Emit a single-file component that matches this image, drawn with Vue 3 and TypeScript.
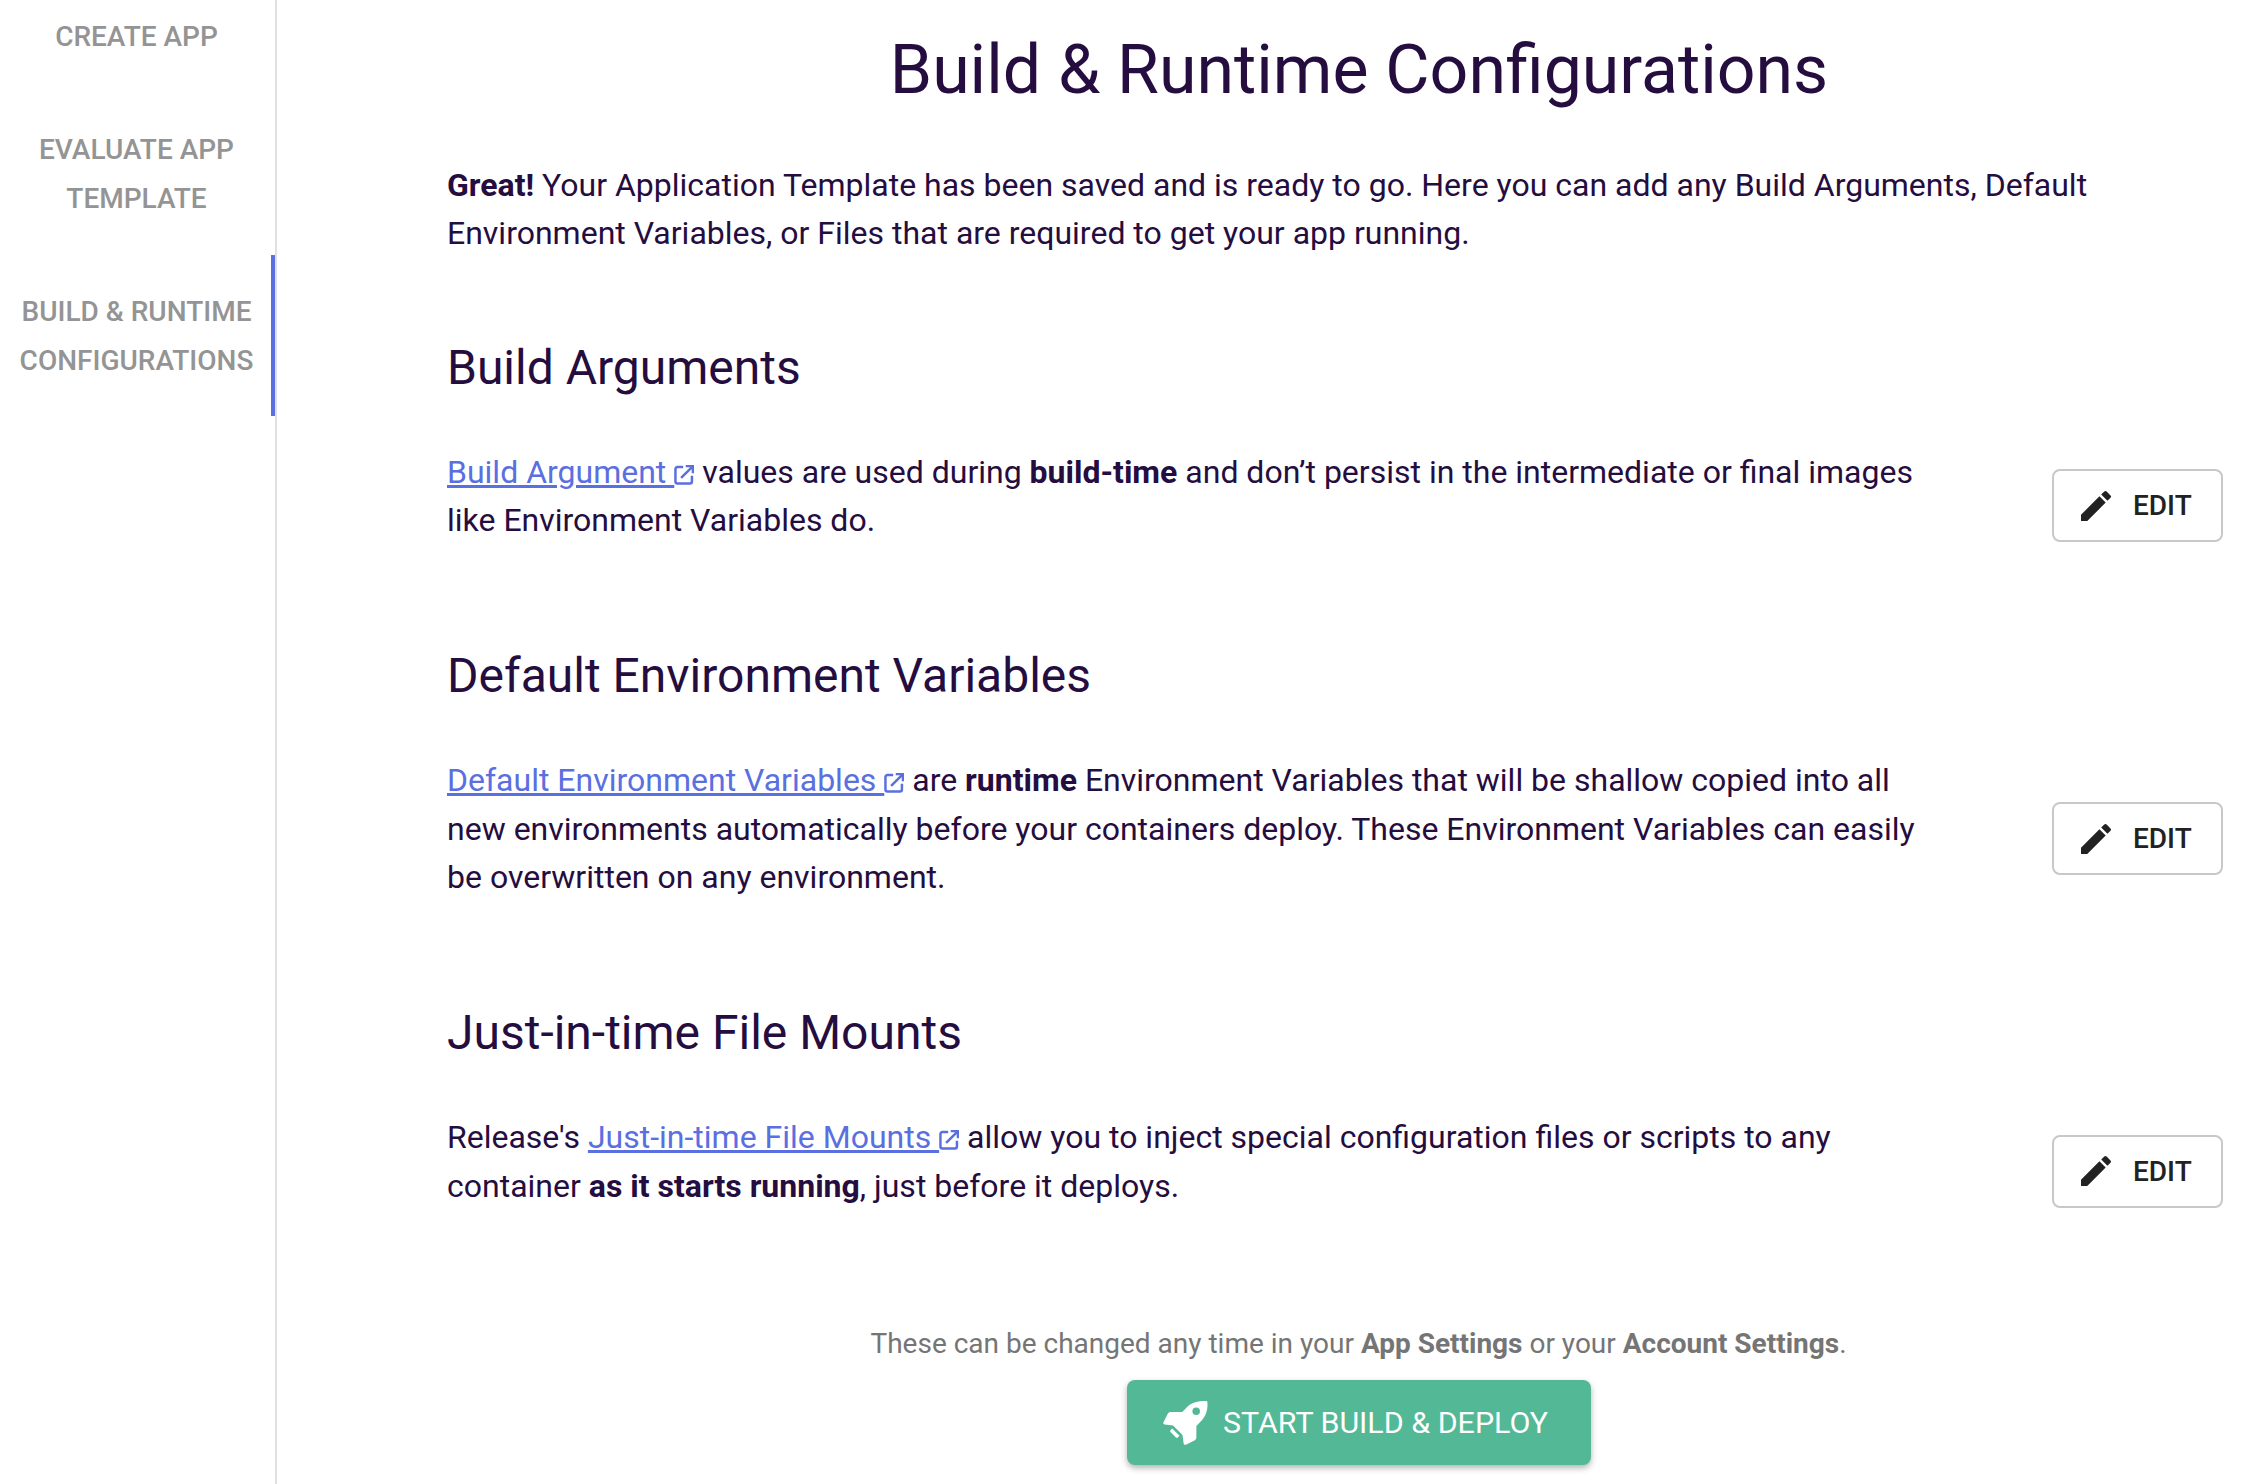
<script setup lang="ts">
const nav = [
  { lines: ['CREATE APP'], active: false, first: true },
  { lines: ['EVALUATE APP', 'TEMPLATE'], active: false, first: false },
  { lines: ['BUILD & RUNTIME', 'CONFIGURATIONS'], active: true, first: false },
]
</script>

<template>
  <div class="page">
    <aside class="side">
      <div v-for="item in nav" :key="item.lines[0]" class="nav" :class="{ active: item.active, first: item.first }">
        <div v-for="l in item.lines" :key="l">{{ l }}</div>
      </div>
    </aside>
    <main class="main">
      <h1 class="title">Build &amp; Runtime Configurations</h1>
      <p class="intro"><b>Great!</b> Your Application Template has been saved and is ready to go. Here you can add any Build Arguments, Default Environment Variables, or Files that are required to get your app running.</p>

      <h2 class="head h-a">Build Arguments</h2>
      <div class="row">
        <p class="para"><a class="link">Build Argument </a><svg class="ext" viewBox="2.600 2 19.400 19.400"><path d="M11.500 4H6a2 2 0 0 0-2 2v12a2 2 0 0 0 2 2h12a2 2 0 0 0 2-2v-5.500"/><path d="M9.500 14.500L20.500 3.500M14 3h7v7"/></svg> values are used during <b>build-time</b> and don’t persist in the intermediate or final images like Environment Variables do.</p>
        <button class="edit"><svg class="pen" viewBox="0 0 24 24"><path d="M3 17.25V21h3.750L17.810 9.940l-3.750-3.750L3 17.250zM20.710 7.040a1 1 0 0 0 0-1.410l-2.340-2.340a1 1 0 0 0-1.410 0l-1.830 1.830 3.750 3.750 1.830-1.830z"/></svg>EDIT</button>
      </div>

      <h2 class="head h-b">Default Environment Variables</h2>
      <div class="row">
        <p class="para"><a class="link">Default Environment Variables </a><svg class="ext" viewBox="2.600 2 19.400 19.400"><path d="M11.500 4H6a2 2 0 0 0-2 2v12a2 2 0 0 0 2 2h12a2 2 0 0 0 2-2v-5.500"/><path d="M9.500 14.500L20.500 3.500M14 3h7v7"/></svg> are <b>runtime</b> Environment Variables that will be shallow copied into all new environments automatically before your containers deploy. These Environment Variables can easily be overwritten on any environment.</p>
        <button class="edit"><svg class="pen" viewBox="0 0 24 24"><path d="M3 17.25V21h3.750L17.810 9.940l-3.750-3.750L3 17.250zM20.710 7.040a1 1 0 0 0 0-1.410l-2.340-2.340a1 1 0 0 0-1.410 0l-1.830 1.830 3.750 3.750 1.830-1.830z"/></svg>EDIT</button>
      </div>

      <h2 class="head h-b">Just-in-time File Mounts</h2>
      <div class="row">
        <p class="para">Release's <a class="link">Just-in-time File Mounts </a><svg class="ext" viewBox="2.600 2 19.400 19.400"><path d="M11.500 4H6a2 2 0 0 0-2 2v12a2 2 0 0 0 2 2h12a2 2 0 0 0 2-2v-5.500"/><path d="M9.500 14.500L20.500 3.500M14 3h7v7"/></svg> allow you to inject special configuration files or scripts to any container <b>as it starts running</b>, just before it deploys.</p>
        <button class="edit"><svg class="pen" viewBox="0 0 24 24"><path d="M3 17.25V21h3.750L17.810 9.940l-3.750-3.750L3 17.250zM20.710 7.040a1 1 0 0 0 0-1.410l-2.340-2.340a1 1 0 0 0-1.410 0l-1.830 1.830 3.750 3.750 1.830-1.830z"/></svg>EDIT</button>
      </div>

      <div class="foot">
        <p class="note">These can be changed any time in your <b>App Settings</b> or your <b>Account Settings</b>.</p>
        <button class="start"><svg class="rocket" viewBox="0 0 24 24"><path fill-rule="evenodd" d="M23.600 .6C20 .3 15.800 1 13 3.600L10.300 6.400H3.900Q3 6.400 2.600 7.200L.2 12Q-.1 13 .9 13L5.400 13.600L10.400 18.600L11 23.200Q11.200 24.200 12.200 23.800L17 21.400Q17.800 21 17.800 20V13.800L20.500 11C23.300 8.200 24.100 4 23.600 .6ZM17.700 4A2 2 0 1 0 17.700 8A2 2 0 1 0 17.700 4Z"/><path d="M4.900 15.200L8.800 19.100L7.900 20Q7.400 20.500 6.900 20L4 17.100Q3.500 16.600 4 16.100Z"/></svg>START BUILD &amp; DEPLOY</button>
      </div>
    </main>
  </div>
</template>

<style>
html, body { margin: 0; background: #fff; overflow: hidden; }
</style>

<style scoped>
.page {
  display: flex;
  width: 2266px;
  height: 1484px;
  overflow: hidden;
  font-family: Roboto, "Liberation Sans", sans-serif;
  color: #250d40;
}
.side {
  width: 275px;
  flex: none;
  border-right: 2px solid #e0e0e0;
  box-sizing: content-box;
}
.nav {
  padding: 32px 0 32px 2px;
  font-size: 28px;
  line-height: 49px;
  font-weight: 500;
  color: #949494;
  text-align: center;
  white-space: nowrap;
  border-right: 4px solid transparent;
}
.nav.first { padding-top: 11.5px; padding-bottom: 32.5px; }
.nav.active { border-right-color: #5a6fe0; padding-bottom: 30.5px; }
.main {
  flex: 1;
  min-width: 0;
  padding: 0 43px 0 170px;
}
.title {
  margin: 32px 0 0;
  font-size: 68px;
  line-height: 76px;
  font-weight: 400;
  text-align: center;
  width: 1824px;
}
.intro {
  margin: 53px 0 0;
  font-size: 32px;
  line-height: 48.2px;
  width: 1680px;
}
.head {
  margin: 0;
  font-size: 48px;
  line-height: 60px;
  font-weight: 400;
}
.h-a { margin-top: 80.5px; }
.h-b { margin-top: 101.500px; }
.row {
  display: flex;
  align-items: center;
  justify-content: space-between;
  margin-top: 50px;
}
.para {
  margin: 0;
  font-size: 32px;
  line-height: 48.5px;
  width: 1490px;
}
.link { color: #5a6fe0; text-decoration: underline; }
.ext {
  width: 20px;
  height: 20px;
  fill: none;
  stroke: #5a6fe0;
  stroke-width: 2.4;
  vertical-align: -2px;
}
.edit {
  display: flex;
  align-items: center;
  justify-content: flex-start;
  gap: 17px;
  width: 171px;
  height: 73px;
  margin-top: 19px;
  box-sizing: border-box;
  background: #fff;
  border: 2px solid #c8c8c8;
  border-radius: 8px;
  font-family: Roboto, sans-serif;
  font-size: 28px;
  font-weight: 500;
  color: #222;
  padding: 0 0 0 22px;
}
.pen { width: 40px; height: 40px; fill: #222; flex: none; }
.foot { width: 1823px; text-align: center; margin-top: 113px; }
.note { margin: 0; font-size: 28px; line-height: 42px; color: #757575; }
.start {
  display: inline-flex;
  align-items: center;
  justify-content: center;
  gap: 15px;
  width: 464px;
  height: 85px;
  margin-top: 14.5px;
  border: 0;
  border-radius: 8px;
  background: #53b896;
  color: #fff;
  font-family: Roboto, sans-serif;
  font-size: 30.4px;
  font-weight: 400;
  padding: 0 6px 0 0;
  box-shadow: 0 3px 6px rgba(0,0,0,.3);
}
.rocket { width: 45px; height: 45px; fill: #fff; }
</style>
